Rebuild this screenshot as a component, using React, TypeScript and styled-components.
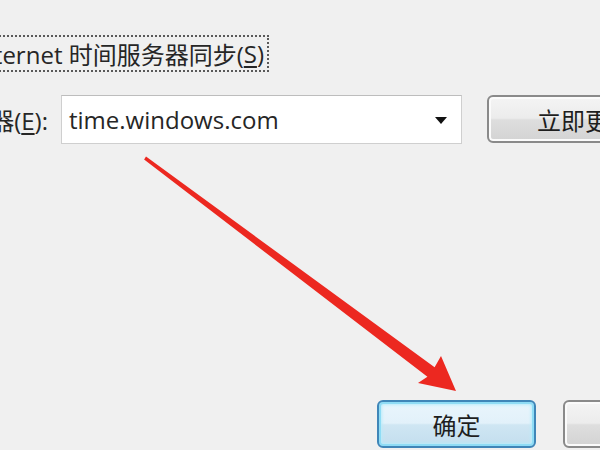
import React from "react";
import styled, { createGlobalStyle } from "styled-components";

const Global = createGlobalStyle`
  html, body { margin: 0; padding: 0; background: #f0f0f0; }
  #root { width: 600px; height: 450px; }
`;

const Screen = styled.div`
  position: relative;
  width: 600px;
  height: 450px;
  overflow: hidden;
  background: #f0f0f0;
  font-family: "Open Sans", "Noto Sans CJK SC", sans-serif;
  color: #262626;
  display: flex;
  flex-direction: column;
`;

const CheckRow = styled.div`
  margin-top: 35px;
  width: 269px;
  height: 37px;
  display: flex;
  justify-content: flex-end;
  align-items: stretch;
  flex-shrink: 0;
`;

const FocusBox = styled.div`
  flex-shrink: 0;
  display: flex;
  align-items: center;
  box-sizing: border-box;
  border: 2px dotted #5a5a5a;
  padding: 0 3px 0 6px;
  font-size: 24px;
  white-space: nowrap;
`;

const Key = styled.span`
  text-decoration: underline;
  text-underline-offset: 3px;
  text-decoration-thickness: 1.5px;
`;

const ServerRow = styled.div`
  margin-top: 23px;
  height: 49px;
  display: flex;
  align-items: stretch;
  flex-shrink: 0;
`;

const Label = styled.div`
  width: 48px;
  flex-shrink: 0;
  display: flex;
  justify-content: flex-end;
  align-items: center;
  margin-right: 13px;
  font-size: 24px;
  white-space: nowrap;
`;

const Combo = styled.div`
  width: 401px;
  flex-shrink: 0;
  box-sizing: border-box;
  background: #ffffff;
  border: 1px solid #cfcfcf;
  border-top-color: #bdbdbd;
  display: flex;
  align-items: center;
  justify-content: space-between;
  padding: 0 14px 0 7px;
  font-size: 24px;
  margin-right: 25px;
`;

const Caret = styled.span`
  width: 0;
  height: 0;
  border-left: 6px solid transparent;
  border-right: 6px solid transparent;
  border-top: 7px solid #111;
  margin-top: 2px;
`;

const Button = styled.div<{ $primary?: boolean; $width: number }>`
  width: ${(p) => p.$width}px;
  height: 48px;
  flex-shrink: 0;
  box-sizing: border-box;
  border-radius: 6px;
  display: flex;
  align-items: center;
  justify-content: center;
  font-size: 24px;
  color: #1e1e1e;
  border: 2px solid ${(p) => (p.$primary ? "#3f86b8" : "#8a8a8a")};
  background: ${(p) =>
    p.$primary
      ? "linear-gradient(#e9f5fc 0%, #e2f1fa 48%, #cfe6f3 52%, #c3deee 100%)"
      : "linear-gradient(#f4f4f4 0%, #ececec 48%, #dedede 52%, #d3d3d3 100%)"};
  box-shadow: ${(p) =>
    p.$primary
      ? "inset 0 0 0 2px #8fdcf5, inset 0 0 3px 3px #b8ecfa"
      : "inset 0 0 0 2px #fbfbfb"};
`;

const ButtonRow = styled.div`
  margin-top: auto;
  padding: 0 0 2px 377px;
  display: flex;
  gap: 27px;
  flex-shrink: 0;
`;

const ArrowLayer = styled.svg`
  position: absolute;
  left: 0;
  top: 0;
  width: 600px;
  height: 450px;
  pointer-events: none;
`;

export default function App() {
  return (
    <>
      <Global />
      <Screen>
        <CheckRow>
          <FocusBox>
            与 Internet 时间服务器同步(<Key>S</Key>)
          </FocusBox>
        </CheckRow>
        <ServerRow>
          <Label>
            <span>
              服务器(<Key>E</Key>):
            </span>
          </Label>
          <Combo>
            <span>time.windows.com</span>
            <Caret />
          </Combo>
          <Button $width={196}>立即更新</Button>
        </ServerRow>
        <ButtonRow>
          <Button $primary $width={159}>确定</Button>
          <Button $width={159}>取消</Button>
        </ButtonRow>
        <ArrowLayer viewBox="0 0 600 450">
          <polygon
            points="146,156.6 434.6,367.2 441,356 456,391 418,383 427.4,376.8 144.1,159.4"
            fill="#ec2820"
            style={{ filter: "blur(0.5px)" }}
          />
        </ArrowLayer>
      </Screen>
    </>
  );
}
